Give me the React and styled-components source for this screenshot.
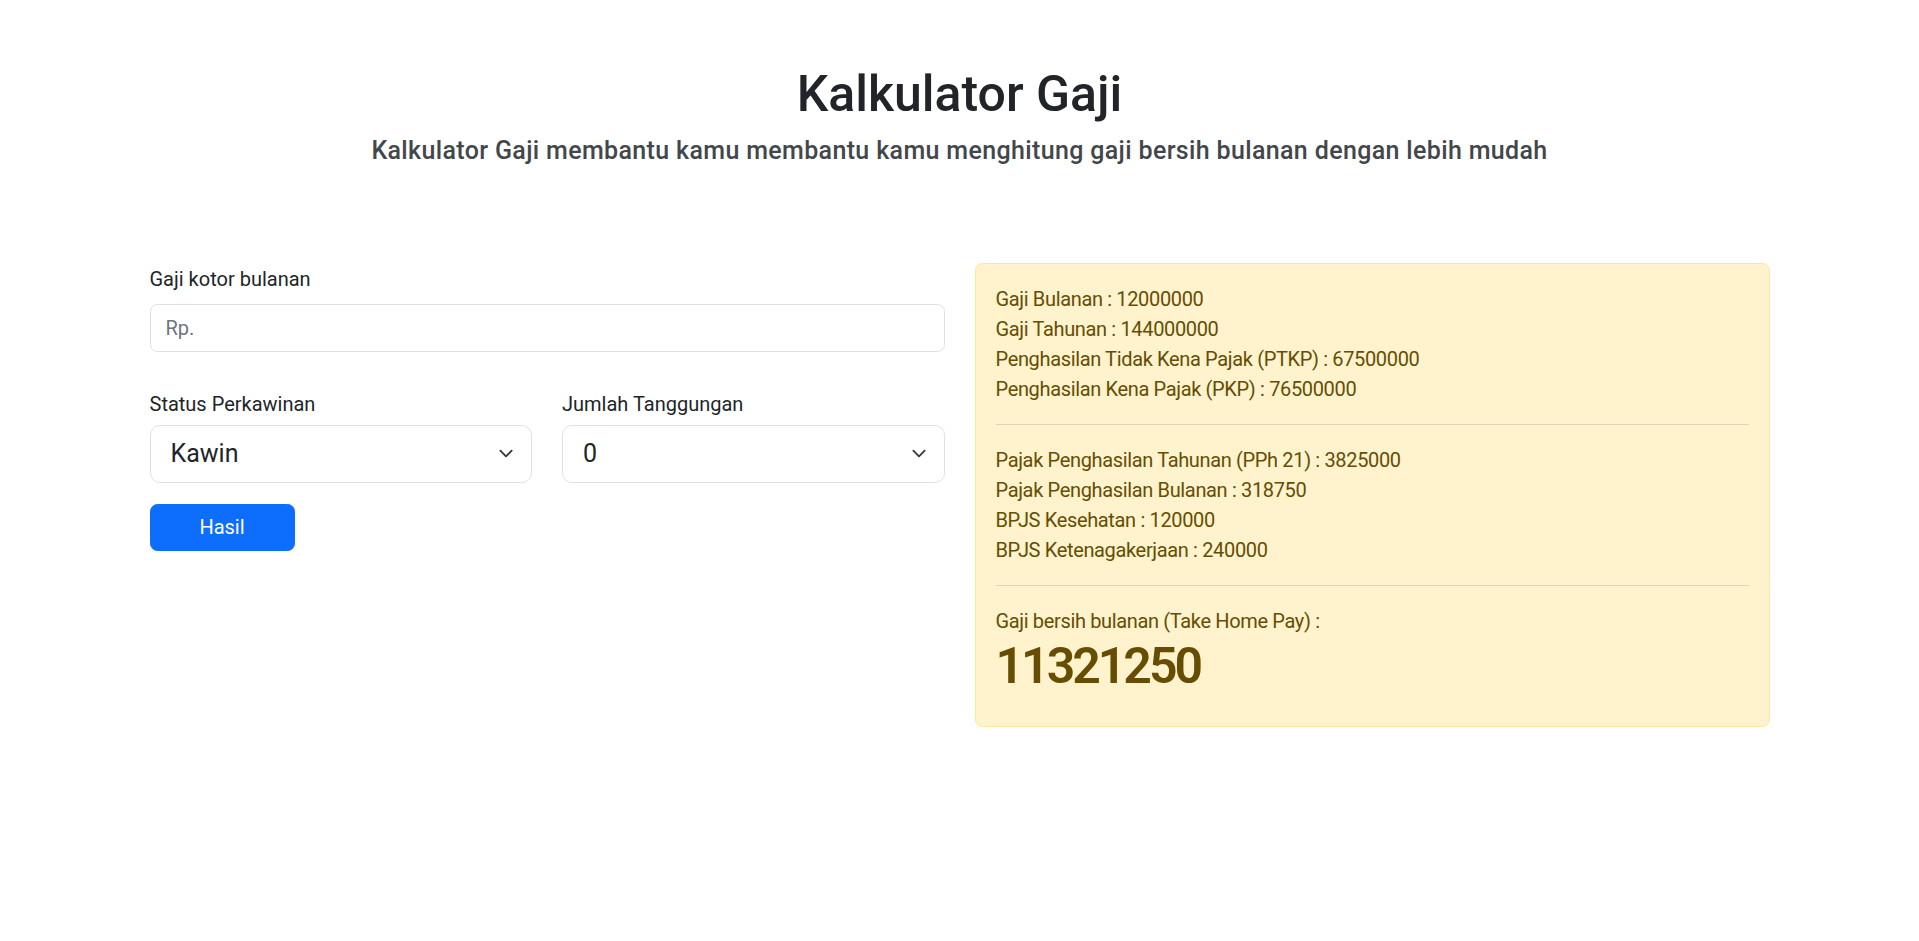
import React, { useState } from 'react'
import styled, { createGlobalStyle } from 'styled-components'

const GlobalStyle = createGlobalStyle`
  * { box-sizing: border-box; }
  body {
    margin: 0;
    font-family: "Segoe UI", Roboto, "Liberation Sans", sans-serif;
    font-size: 20px;
    line-height: 1.5;
    color: #212529;
    background: #fff;
  }
`

const chevron = `url("data:image/svg+xml,%3csvg xmlns='http://www.w3.org/2000/svg' viewBox='0 0 16 16'%3e%3cpath fill='none' stroke='%23343a40' stroke-linecap='round' stroke-linejoin='round' stroke-width='2' d='m2 5 6 6 6-6'/%3e%3c/svg%3e")`

const rows = [
  ['Gaji Bulanan', 12000000],
  ['Gaji Tahunan', 144000000],
  ['Penghasilan Tidak Kena Pajak (PTKP)', 67500000],
  ['Penghasilan Kena Pajak (PKP)', 76500000],
]

const taxes = [
  ['Pajak Penghasilan Tahunan (PPh 21)', 3825000],
  ['Pajak Penghasilan Bulanan', 318750],
  ['BPJS Kesehatan', 120000],
  ['BPJS Ketenagakerjaan', 240000],
]

const App = () => {
  const [status, setStatus] = useState('Kawin')
  const [tanggungan, setTanggungan] = useState('0')

  return (
    <>
      <GlobalStyle />
      <Container>
        <Header>
          <Title>Kalkulator Gaji</Title>
          <Subtitle>
            Kalkulator Gaji membantu kamu membantu kamu menghitung gaji bersih bulanan dengan lebih mudah
          </Subtitle>
        </Header>

        <Row>
          <Form onSubmit={e => e.preventDefault()}>
            <Field>
              <Label>Gaji kotor bulanan</Label>
              <Input type="text" placeholder="Rp." />
            </Field>

            <SelectRow>
              <div>
                <Label $tight>Status Perkawinan</Label>
                <Select value={status} onChange={e => setStatus(e.target.value)}>
                  <option>Kawin</option>
                  <option>Tidak Kawin</option>
                </Select>
              </div>
              <div>
                <Label $tight>Jumlah Tanggungan</Label>
                <Select value={tanggungan} onChange={e => setTanggungan(e.target.value)}>
                  {['0', '1', '2', '3'].map(n => (
                    <option key={n}>{n}</option>
                  ))}
                </Select>
              </div>
            </SelectRow>

            <Button type="submit">Hasil</Button>
          </Form>

          <Result>
            {rows.map(([label, value]) => (
              <Line key={label}>{label} : {value}</Line>
            ))}
            <Divider />
            {taxes.map(([label, value]) => (
              <Line key={label}>{label} : {value}</Line>
            ))}
            <Divider />
            <Line>Gaji bersih bulanan (Take Home Pay) :</Line>
            <Total>11321250</Total>
          </Result>
        </Row>
      </Container>
    </>
  )
}

export default App

const Container = styled.div`
  max-width: 1650px;
  margin: 0 auto;
  padding: 0 15px;
`

const Header = styled.header`
  text-align: center;
  padding-top: 64px;
  margin-bottom: 97px;
`

const Title = styled.h1`
  margin: 0 0 12px;
  font-size: 50px;
  font-weight: 500;
  line-height: 1.2;
`

const Subtitle = styled.h5`
  margin: 0 0 10px;
  font-size: 25px;
  font-weight: 500;
  line-height: 1.2;
  letter-spacing: 0.35px;
  color: #43474b;
`

const Row = styled.div`
  display: grid;
  grid-template-columns: 1fr 1fr;
  column-gap: 30px;
  align-items: start;
`

const Form = styled.form`
  display: flex;
  flex-direction: column;
  padding-top: 1px;
`

const Field = styled.div`
  margin-bottom: 37px;
`

const Label = styled.label`
  display: block;
  margin-bottom: ${({ $tight }) => ($tight ? '6px' : '10px')};
`

const Input = styled.input`
  display: block;
  width: 100%;
  height: 47.5px;
  padding: 7.5px 15px;
  font: inherit;
  color: #212529;
  border: 1px solid #dee2e6;
  border-radius: 7.5px;
  outline: none;
  &::placeholder { color: #6c757d; }
`

const SelectRow = styled.div`
  display: grid;
  grid-template-columns: 1fr 1fr;
  column-gap: 30px;
`

const Select = styled.select`
  display: block;
  width: 100%;
  height: 58px;
  padding: 8px 45px 8px 20px;
  font: inherit;
  font-size: 25px;
  color: #212529;
  background: #fff ${chevron} no-repeat right 15px center / 20px 15px;
  border: 1px solid #dee2e6;
  border-radius: 10px;
  appearance: none;
  outline: none;
`

const Button = styled.button`
  margin-top: 21px;
  width: 145px;
  height: 47px;
  font: inherit;
  color: #fff;
  background: #0d6efd;
  border: 1px solid #0d6efd;
  border-radius: 7.5px;
  cursor: pointer;
`

const Result = styled.div`
  padding: 20px;
  color: #664d03;
  background: #fff3cd;
  border: 1px solid #ffe69c;
  border-radius: 7.5px;
  letter-spacing: -0.35px;
`

const Line = styled.p`
  margin: 0;
`

const Divider = styled.hr`
  margin: 20px 0;
  border: 0;
  border-top: 1px solid currentColor;
  opacity: 0.25;
`

const Total = styled.h1`
  margin: 0 0 10px;
  font-size: 50px;
  font-weight: 600;
  line-height: 1.2;
  letter-spacing: -3px;
`
